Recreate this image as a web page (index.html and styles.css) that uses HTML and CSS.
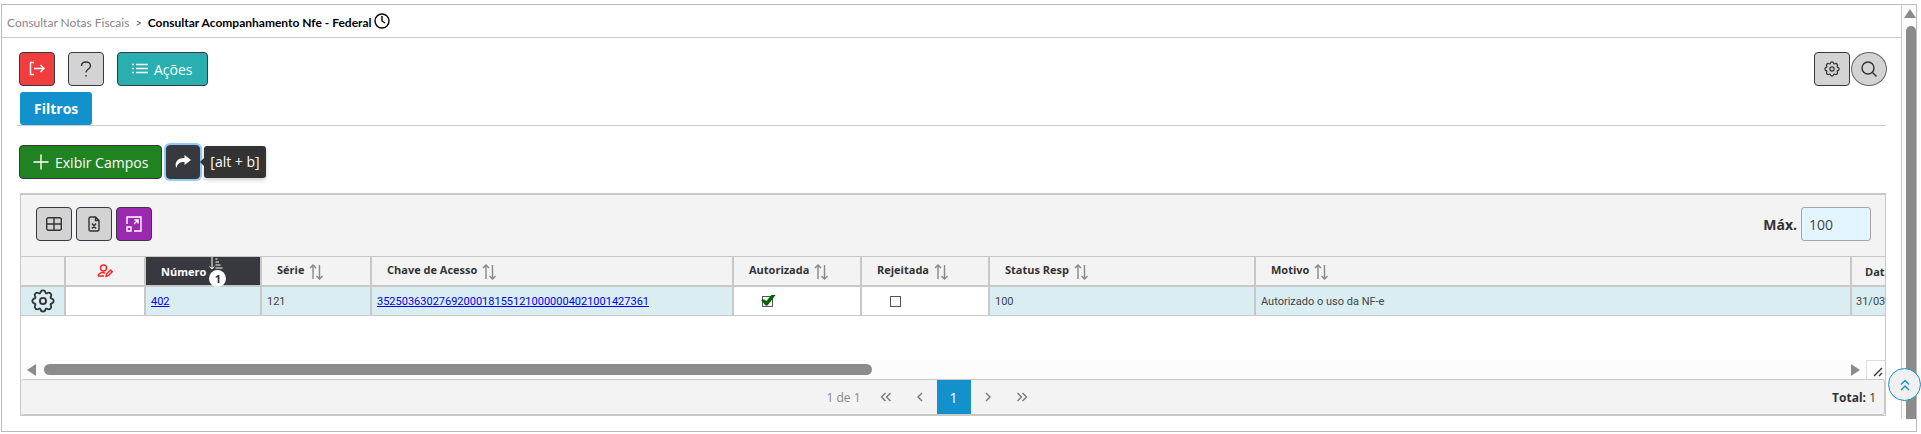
FILE: index.html
```html
<!DOCTYPE html>
<html lang="pt-BR">
<head>
    <meta charset="UTF-8">
    <title>Consultar Acompanhamento Nfe - Federal</title>
    <link rel="stylesheet" href="styles.css">
</head>
<body>
    <!-- shared icons -->
    <svg class="sprite" aria-hidden="true">
        <symbol id="gear" viewBox="-1 -1 18 18">
            <path d="M9.796 1.343c-.527-1.790-3.065-1.790-3.592 0l-.094.319a.873.873 0 0 1-1.255.52l-.292-.16c-1.640-.892-3.433.902-2.540 2.541l.159.292a.873.873 0 0 1-.52 1.255l-.319.094c-1.790.527-1.790 3.065 0 3.592l.319.094a.873.873 0 0 1 .52 1.255l-.16.292c-.892 1.640.901 3.434 2.541 2.540l.292-.159a.873.873 0 0 1 1.255.52l.094.319c.527 1.790 3.065 1.790 3.592 0l.094-.319a.873.873 0 0 1 1.255-.52l.292.16c1.640.893 3.434-.902 2.540-2.541l-.159-.292a.873.873 0 0 1 .52-1.255l.319-.094c1.790-.527 1.790-3.065 0-3.592l-.319-.094a.873.873 0 0 1-.52-1.255l.16-.292c.893-1.640-.902-3.433-2.541-2.540l-.292.159a.873.873 0 0 1-1.255-.52z"/>
            <circle cx="8" cy="8" r="2.300"/>
        </symbol>
        <symbol id="sort" viewBox="0 0 14 16">
            <path d="M4 15V1M1 4l3-3 3 3M10.500 1v13.500M7.500 12l3 3 3-3"/>
        </symbol>
    </svg>

    <div class="frame">
        <main class="page">
            <nav class="breadcrumb">
                <a href="#">Consultar Notas Fiscais</a>
                <span class="sep">&gt;</span>
                <strong>Consultar Acompanhamento Nfe - Federal</strong>
                <svg class="icon" width="16" height="16" viewBox="0 0 16 16"><circle cx="8" cy="8" r="7"/><path d="M8 3v5l3 2"/></svg>
            </nav>

            <div class="content">
                <div class="actions">
                    <button class="btn btn-red" aria-label="Sair">
                        <svg class="icon" width="16" height="16" viewBox="0 0 16 16"><path d="M5 1.500H1.500v12H5M5 7.500h10M11.500 4l3.500 3.500-3.500 3.500"/></svg>
                    </button>
                    <button class="btn" aria-label="Ajuda">
                        <svg class="icon" width="12" height="16" viewBox="0 0 12 16"><path d="M1.500 5C1.500 2.500 3.500 1 6 1s4.500 1.500 4.500 4C10.500 8 6 8 6 11.500M6 14v1.500"/></svg>
                    </button>
                    <button class="btn btn-teal">
                        <svg class="icon" width="16" height="16" viewBox="0 0 16 16"><path d="M0 3.500h2M4 3.500h12M0 7.500h2M4 7.500h12M0 11.500h2M4 11.500h12"/></svg>
                        Ações
                    </button>
                    <div class="actions-right">
                        <button class="btn" aria-label="Configurações"><svg class="icon" width="16" height="16"><use href="#gear"/></svg></button>
                        <button class="btn btn-round" aria-label="Pesquisar">
                            <svg class="icon" width="16" height="16" viewBox="0 0 16 16"><circle cx="7" cy="7" r="6"/><path d="M11.500 11.500l4 4"/></svg>
                        </button>
                    </div>
                </div>

                <div class="tabs"><button class="tab">Filtros</button></div>

                <div class="filter-bar">
                    <button class="btn btn-green">
                        <svg class="icon" width="16" height="16" viewBox="0 0 16 16"><path d="M8 .5v15M.5 8h15"/></svg>
                        Exibir Campos
                    </button>
                    <button class="btn btn-dark" aria-label="Buscar">
                        <svg width="18" height="14" viewBox="0 0 18 14"><path fill="currentColor" d="M10.500 0L17 5l-6.500 5V7C6 7 3.500 8 2.500 13 0 8 3 3 10.500 3z"/></svg>
                    </button>
                    <span class="tooltip" role="tooltip">[alt + b]</span>
                </div>

                <section class="grid">
                    <div class="grid-toolbar">
                        <button class="btn" aria-label="Colunas">
                            <svg class="icon" width="16" height="14" viewBox="0 0 16 14"><rect x=".7" y=".7" width="14.600" height="12.600" rx="2"/><path d="M8 1v12M1 7h14"/></svg>
                        </button>
                        <button class="btn" aria-label="Exportar Excel">
                            <svg class="icon" width="12" height="16" viewBox="0 0 12 16"><path d="M7.500 1H2.500Q1 1 1 2.500v11Q1 15 2.500 15h7q1.500 0 1.500-1.500V4.500zM7.500 1v3.500H11M4 7.500l4 5M8 7.500l-4 5"/></svg>
                        </button>
                        <button class="btn btn-purple" aria-label="Expandir">
                            <svg class="icon" width="16" height="16" viewBox="0 0 16 16"><path d="M1 8V1h14v14H8M8 8l4-4M8.500 4H12v3.500M1 11h4v4H1z"/></svg>
                        </button>
                        <label for="max">Máx.</label>
                        <input id="max" type="text" value="100">
                    </div>

                    <div class="grid-body">
                        <table>
                            <colgroup>
                                <col class="c-gear"><col class="c-user"><col class="c-num"><col class="c-serie"><col class="c-chave">
                                <col class="c-check"><col class="c-check"><col class="c-status"><col><col class="c-data">
                            </colgroup>
                            <thead>
                                <tr>
                                    <th></th>
                                    <th class="user">
                                        <svg class="icon" width="16" height="14" viewBox="0 0 16 14"><circle cx="6.500" cy="4" r="3"/><path d="M1 12c1-3.500 4-4 7-3M1 12h6M9 12.500l.5-2.500 4-4 1.700 1.700-4 4z"/></svg>
                                    </th>
                                    <th class="sorted">Número
                                        <span class="sort-mark">
                                            <svg class="icon" width="14" height="13" viewBox="0 0 14 13"><path d="M3 0v12M.5 9.500L3 12l2.500-2.500M6.500 2h2M6.500 5h3.500M6.500 8h5M6.500 11h7"/></svg>
                                            <span class="badge">1</span>
                                        </span>
                                    </th>
                                    <th>Série <svg class="sort"><use href="#sort"/></svg></th>
                                    <th>Chave de Acesso <svg class="sort"><use href="#sort"/></svg></th>
                                    <th>Autorizada <svg class="sort"><use href="#sort"/></svg></th>
                                    <th>Rejeitada <svg class="sort"><use href="#sort"/></svg></th>
                                    <th>Status Resp <svg class="sort"><use href="#sort"/></svg></th>
                                    <th>Motivo <svg class="sort"><use href="#sort"/></svg></th>
                                    <th class="last">Dat</th>
                                </tr>
                            </thead>
                            <tbody>
                                <tr>
                                    <td class="row-gear"><svg class="icon" width="24" height="24"><use href="#gear"/></svg></td>
                                    <td class="blank"></td>
                                    <td><a href="#">402</a></td>
                                    <td>121</td>
                                    <td><a href="#">35250363027692000181551210000004021001427361</a></td>
                                    <td class="check"><input type="checkbox" aria-label="Autorizada" checked></td>
                                    <td class="check"><input type="checkbox" aria-label="Rejeitada"></td>
                                    <td>100</td>
                                    <td>Autorizado o uso da NF-e</td>
                                    <td class="last">31/03</td>
                                </tr>
                            </tbody>
                        </table>
                    </div>

                    <div class="hscroll">
                        <span class="arrow-left"></span>
                        <div class="htrack"><div class="hthumb"></div></div>
                        <span class="arrow-right"></span>
                        <span class="resizer">
                            <svg class="icon" width="10" height="10" viewBox="0 0 10 10"><path d="M1 9l8-8M6 9l3-3"/></svg>
                        </span>
                    </div>

                    <footer class="pager">
                        <div class="pages">
                            <span class="page-info">1 de 1</span>
                            <button aria-label="Primeira"><svg class="icon" width="12" height="10" viewBox="0 0 12 10"><path d="M5.500 1l-4 4 4 4M10.500 1l-4 4 4 4"/></svg></button>
                            <button aria-label="Anterior"><svg class="icon" width="12" height="10" viewBox="0 0 12 10"><path d="M8 1L4 5l4 4"/></svg></button>
                            <button class="current">1</button>
                            <button aria-label="Próxima"><svg class="icon" width="12" height="10" viewBox="0 0 12 10"><path d="M4 1l4 4-4 4"/></svg></button>
                            <button aria-label="Última"><svg class="icon" width="12" height="10" viewBox="0 0 12 10"><path d="M1.500 1l4 4-4 4M6.500 1l4 4-4 4"/></svg></button>
                        </div>
                        <span class="total"><b>Total:</b> 1</span>
                    </footer>
                </section>
            </div>
        </main>

        <div class="vscroll">
            <span class="arrow-up"></span>
            <div class="vthumb"></div>
        </div>

        <button class="to-top" aria-label="Voltar ao topo">
            <svg class="icon" width="12" height="12" viewBox="0 0 12 12"><path d="M2 5.500l4-4 4 4M2 11l4-4 4 4"/></svg>
        </button>
    </div>
</body>
</html>
```
FILE: styles.css
```css
:root {
    --line: #c8c8c8;
    --panel: #f3f3f3;
    --dark: #38383f;
    --blue: #1291cd;
    --row: #d9edf3;
    --thumb: #8b8b8b;
}

* {
    box-sizing: border-box;
}

body {
    margin: 0;
    padding: 4px 4px 0 1px;
    background: #fff;
    color: #333;
    font-family: "Open Sans", "Noto Sans", sans-serif;
    font-size: 14px;
}

button, input {
    font: inherit;
}

.sprite {
    position: absolute;
    width: 0;
    height: 0;
}

.icon, .sort {
    fill: none;
    stroke: currentColor;
    stroke-width: 1.4;
    flex: none;
}

.frame {
    position: relative;
    display: flex;
    padding-bottom: 12px;
    border: 1px solid #bbb;
}

.page {
    flex: 1;
    min-width: 0;
    border-right: 1px solid var(--line);
}

.breadcrumb {
    display: flex;
    align-items: center;
    gap: 6px;
    height: 33px;
    padding: 4px 5px 0;
    border-bottom: 1px solid #ccc;
    font: 12px/16px Lato, sans-serif;
    color: #000;
}

.breadcrumb a {
    color: #888;
    text-decoration: none;
}

.breadcrumb .sep {
    color: #555;
    font-size: 11px;
}

.breadcrumb .icon {
    margin: -4px 0 0 -4px;
}

.content {
    padding: 14px 15px 3px 17px;
}

/* buttons */
.btn {
    display: flex;
    align-items: center;
    justify-content: center;
    gap: 6px;
    min-width: 36px;
    height: 34px;
    padding: 0;
    border: 1px solid var(--dark);
    border-radius: 4px;
    background: #d3d3d3;
    color: #333;
}

.btn-red {
    background: #f23d3f;
    color: #fff;
}

.btn-teal {
    padding: 0 14px;
    background: #29afb0;
    color: #fff;
}

.btn-green {
    padding: 0 13px;
    background: #218221;
    color: #fff;
}

.btn-purple {
    background: #9c27b0;
    color: #fff;
}

.btn-round {
    border-color: #666;
    border-radius: 50%;
}

.btn-dark {
    min-width: 34px;
    background: var(--dark);
    color: #fff;
    box-shadow: 0 0 0 2px #90caf9;
}

.actions {
    display: flex;
    gap: 13px;
}

.actions-right {
    display: flex;
    gap: 1px;
    margin: 0 -1px 0 auto;
}

.tabs {
    margin-left: -2px;
    padding: 6px 0 0 3px;
    border-bottom: 1px solid #ccc;
}

.tab {
    display: block;
    height: 33px;
    padding: 0 14px;
    border: 0;
    border-radius: 3px;
    background: var(--blue);
    color: #fff;
    font-weight: 700;
}

.filter-bar {
    display: flex;
    align-items: center;
    gap: 4px;
    margin: 19px 0 14px;
}

.tooltip {
    position: relative;
    height: 32px;
    padding: 0 6px;
    border-radius: 3px;
    background: #333;
    color: #fff;
    line-height: 32px;
    box-shadow: 0 2px 4px rgba(0, 0, 0, 0.2);
}

.tooltip::before {
    content: "";
    position: absolute;
    top: 12px;
    left: -4px;
    border: 4px solid transparent;
    border-left: 0;
    border-right-color: #333;
}

/* grid */
.grid {
    margin-left: 1px;
    border: 1px solid var(--line);
}

.grid-toolbar {
    display: flex;
    align-items: center;
    gap: 4px;
    height: 63px;
    padding: 0 14px 3px 15px;
    border-top: 1px solid var(--line);
    border-bottom: 1px solid var(--line);
    background: var(--panel);
}

.grid-toolbar label {
    margin-left: auto;
    font-weight: 700;
}

.grid-toolbar input {
    width: 70px;
    height: 34px;
    padding: 0 7px;
    border: 1px solid #a6a6a6;
    border-radius: 3px;
    background: #e3f6ff;
    color: #444;
}

.grid-body {
    height: 103px;
}

table {
    width: 100%;
    table-layout: fixed;
    border-collapse: separate;
    border-spacing: 0;
    font-family: Roboto, sans-serif;
    font-size: 11px;
}

.c-gear { width: 45px; }
.c-user { width: 80px; }
.c-num { width: 116px; }
.c-serie { width: 110px; }
.c-chave { width: 362px; }
.c-check { width: 128px; }
.c-status { width: 266px; }
.c-data { width: 33px; }

th, td {
    height: 30px;
    padding: 0 5px;
    border-right: 2px solid var(--line);
    text-align: left;
    white-space: nowrap;
}

th {
    padding: 0 15px;
    border-bottom: 2px solid var(--line);
    background: var(--panel);
    font-family: "Open Sans", sans-serif;
}

td {
    height: 29px;
    border-bottom: 1px solid var(--line);
    background: var(--row);
    color: #444;
}

td a {
    color: #00e;
}

.last {
    padding-right: 0;
    border-right: 0;
}

th.last {
    padding-left: 13px;
}

td.last {
    padding-left: 4px;
}

.sort {
    width: 14px;
    height: 16px;
    margin-left: 2px;
    vertical-align: middle;
    color: #888;
}

th.user {
    padding: 0;
    color: #f22;
    text-align: center;
}

th.user .icon, .row-gear .icon {
    display: block;
    margin: auto;
}

th.sorted {
    background: var(--dark);
    color: #fff;
}

.sort-mark {
    position: relative;
    margin-left: 3px;
}

.sort-mark .icon {
    position: absolute;
    top: -7px;
    left: 0;
    stroke-width: 1;
}

.badge {
    position: absolute;
    top: 6px;
    left: 0;
    z-index: 1;
    width: 17px;
    height: 17px;
    border-radius: 50%;
    background: #fff;
    color: #333;
    line-height: 17px;
    text-align: center;
}

.row-gear {
    padding: 0;
    color: #333;
}

td.blank, td.check {
    background: #fff;
}

td.check {
    padding-left: 28px;
}

.check input {
    position: relative;
    display: block;
    appearance: none;
    width: 11px;
    height: 11px;
    margin: 0;
    border: 1px solid #555;
    background: #fff;
}

.check input:checked::after {
    content: "";
    position: absolute;
    top: -2px;
    left: -2px;
    width: 15px;
    height: 11px;
    background: #006400;
    clip-path: polygon(0 50%, 22% 45%, 36% 60%, 72% 0, 100% 0, 44% 100%, 30% 100%);
}

/* scrollbars */
.hscroll {
    display: flex;
    align-items: center;
    height: 19px;
    padding-left: 6px;
    background: #fcfcfc;
}

.arrow-left {
    border: 6px solid transparent;
    border-left: 0;
    border-right: 9px solid var(--thumb);
}

.arrow-right {
    border: 6px solid transparent;
    border-right: 0;
    border-left: 9px solid var(--thumb);
}

.htrack {
    flex: 1;
    margin: 0 7px 0 8px;
}

.hthumb {
    width: 46%;
    height: 11px;
    border-radius: 6px;
    background: var(--thumb);
}

.resizer {
    display: flex;
    align-items: flex-end;
    justify-content: flex-end;
    width: 19px;
    height: 19px;
    margin-left: 6px;
    padding: 2px;
    border: 1px solid #ddd;
    border-width: 1px 0 0 1px;
    background: #fff;
}

.vscroll {
    display: flex;
    flex-direction: column;
    align-items: flex-end;
    width: 14px;
    padding-top: 4px;
    background: #fcfcfc;
}

.arrow-up {
    border: 6px solid transparent;
    border-top: 0;
    border-bottom: 9px solid var(--thumb);
}

.vthumb {
    flex: 1;
    width: 10px;
    margin-top: 8px;
    border-radius: 5px 5px 0 0;
    background: var(--thumb);
}

/* pager */
.pager {
    display: flex;
    align-items: center;
    height: 36px;
    border: 1px solid var(--line);
    border-width: 1px 1px 1px 0;
    border-radius: 3px;
    background: var(--panel);
    font-size: 12px;
}

.pages {
    flex: 1;
    display: flex;
    align-items: center;
    justify-content: center;
    padding-left: 12px;
    color: #888;
}

.page-info {
    margin-right: 8px;
}

.pages button {
    display: flex;
    align-items: center;
    justify-content: center;
    width: 34px;
    height: 34px;
    padding: 0;
    border: 0;
    background: none;
    color: #777;
}

.pages .current {
    background: var(--blue);
    color: #fff;
    font-size: 14px;
}

.total {
    padding-right: 8px;
}

.to-top {
    position: absolute;
    right: -5px;
    bottom: 30px;
    display: flex;
    align-items: center;
    justify-content: center;
    width: 33px;
    height: 33px;
    padding: 0;
    border: 1px solid var(--blue);
    border-radius: 50%;
    background: #f0f0f0;
    color: var(--blue);
}
```
